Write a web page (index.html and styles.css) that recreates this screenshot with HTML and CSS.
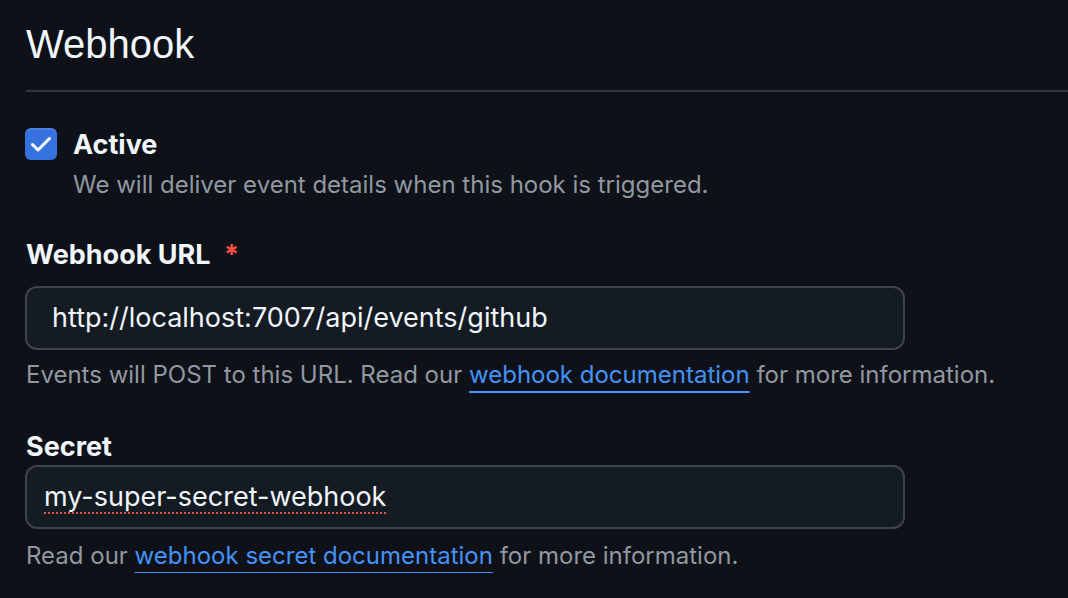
FILE: index.html
```html
<!DOCTYPE html>
<html lang="en">
<head>
<meta charset="utf-8">
<title>Webhook</title>
<link rel="stylesheet" href="styles.css">
</head>
<body>
<main class="page">
  <h2 class="title">Webhook</h2>
  <div class="check-row">
    <span class="checkbox">
      <svg viewBox="0 0 32 32" width="32" height="32" aria-hidden="true">
        <path d="M7.5 16.5 L13 22 L24.5 10.5" fill="none" stroke="#ffffff" stroke-width="3" stroke-linecap="round" stroke-linejoin="round"/>
      </svg>
    </span>
    <div class="check-text">
      <div class="label">Active</div>
      <p class="note">We will deliver event details when this hook is triggered.</p>
    </div>
  </div>
  <div class="field">
    <div class="label">Webhook URL <span class="req">*</span></div>
    <div class="input input-url">http://localhost:7007/api/events/github</div>
    <p class="note">Events will POST to this URL. Read our <a class="link" href="#">webhook documentation</a> for more information.</p>
  </div>
  <div class="field field-secret">
    <div class="label">Secret</div>
    <div class="input input-secret"><span class="misspelled">my-super-secret-webhook</span></div>
    <p class="note">Read our <a class="link" href="#">webhook secret documentation</a> for more information.</p>
  </div>
</main>
</body>
</html>
```

FILE: styles.css
```css
html, body {
  margin: 0;
  padding: 0;
  background: #0e1117;
  color: #f0f6fc;
  font-family: Inter, "Liberation Sans", sans-serif;
}

.page {
  padding: 18px 0 0 26px;
}

.title {
  margin: 0;
  font-family: "Liberation Sans", Arial, sans-serif;
  font-weight: 400;
  font-size: 40px;
  line-height: 52px;
  padding-bottom: 20px;
  border-bottom: 2px solid #30363d;
  color: #f0f6fc;
}

.check-row {
  display: flex;
  gap: 16px;
  margin-top: 36px;
}

.checkbox {
  flex: none;
  width: 32px;
  height: 32px;
  margin-left: -1px;
  border-radius: 6px;
  background: #3572e0;
  box-shadow: inset 0 2px 0 rgba(255, 255, 255, 0.12);
  display: flex;
}

.label {
  font-weight: 700;
  font-size: 27px;
  line-height: 34px;
  color: #f0f6fc;
}

.req {
  color: #f85149;
  margin-left: 7px;
}

.note {
  margin: 0;
  font-size: 24px;
  line-height: 34px;
  color: #9198a1;
}

.check-text .note {
  margin-top: 6px;
}

.link {
  color: #4493f8;
  text-decoration: underline;
  text-decoration-thickness: 2px;
  text-underline-offset: 8px;
}

.field {
  margin-top: 36px;
}

.field-secret {
  margin-top: 38px;
}

.input {
  box-sizing: border-box;
  width: 880px;
  height: 64px;
  margin-left: -1px;
  margin-top: 14px;
  margin-bottom: 8px;
  border: 2px solid #3d444d;
  border-radius: 12px;
  background: #151b23;
  font-size: 27px;
  line-height: 60px;
  color: #f0f6fc;
}

.input-url {
  padding-left: 25px;
}

.input-secret {
  padding-left: 17px;
  margin-top: 1px;
  margin-bottom: 10px;
}

.misspelled {
  text-decoration: underline dotted #e5534b;
  text-decoration-thickness: 2px;
  text-underline-offset: 6px;
}
```
